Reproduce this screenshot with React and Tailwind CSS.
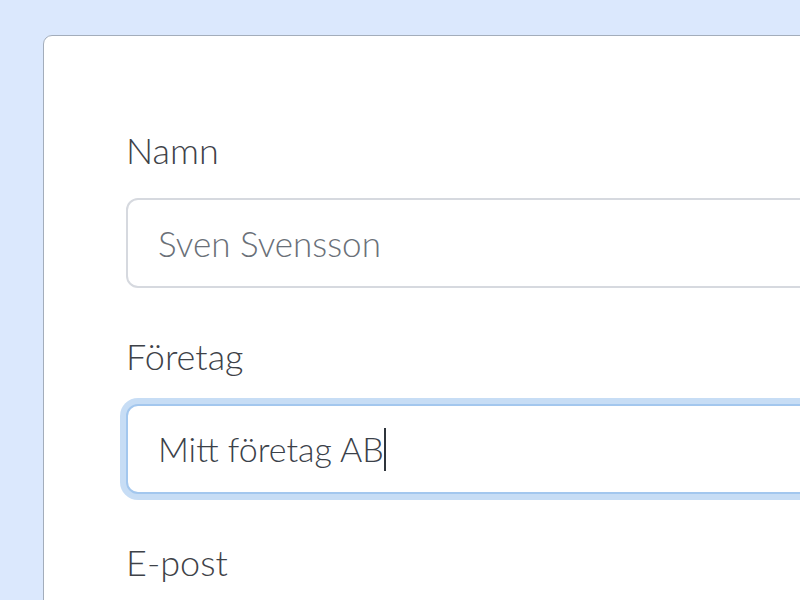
import React from "react";

const fields = [
  { label: "Namn", value: "Sven Svensson", placeholder: true },
  { label: "Företag", value: "Mitt företag AB", focused: true },
  { label: "E-post", value: "" },
];

const Field = ({ label, value, placeholder, focused }) => (
  <div className="flex flex-col">
    <label className="h-[40px] text-[36px] font-light leading-[36px] text-[#3e4248]">{label}</label>
    <div
      className={
        focused
          ? "mt-[26px] h-[90px] rounded-[12px] border-2 border-[#a3c7ee] bg-white pl-[30px] flex items-center shadow-[0_0_0_6px_#c7ddf5]"
          : "mt-[26px] h-[90px] rounded-[12px] border-2 border-[#d6d9df] bg-white pl-[30px] flex items-center"
      }
    >
      <span
        className={
          placeholder
            ? "text-[35px] font-light leading-none text-[#6a7078]"
            : "text-[34px] font-light leading-none text-[#3b4149]"
        }
      >
        {value}
      </span>
      {focused && <span className="h-[43px] w-[2px] bg-[#2f353c]" />}
    </div>
  </div>
);

export default function App() {
  return (
    <div
      className="h-[600px] w-[800px] overflow-hidden bg-[#dbe8fd] pl-[43px] pt-[35px]"
      style={{ fontFamily: "Lato, 'Open Sans', sans-serif" }}
    >
      <div className="h-[700px] w-[900px] rounded-tl-[9px] border border-[#a3adbb] bg-white pl-[82px] pt-[96px]">
        <div className="flex w-[800px] flex-col gap-[50px]">
          {fields.map((f) => (
            <Field key={f.label} {...f} />
          ))}
        </div>
      </div>
    </div>
  );
}
